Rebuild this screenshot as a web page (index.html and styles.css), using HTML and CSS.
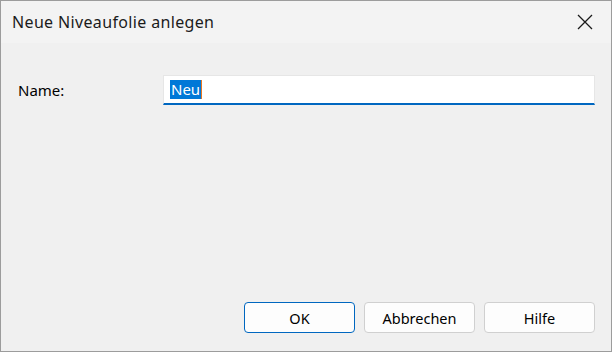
FILE: index.html
```html
<!DOCTYPE html>
<html>
  <head>
    <title>Neue Niveaufolie anlegen</title>
    <link rel="stylesheet" href="styles.css">
  </head>
  <body>
    <div class="window">
      <div class="titlebar">
        <span class="title">Neue Niveaufolie anlegen</span>
        <button class="close" aria-label="Schließen">
          <svg width="16" height="16" viewBox="0 0 16 16">
            <path d="M1 1 L15 15 M15 1 L1 15" stroke="#1a1a1a" stroke-width="1.3" fill="none" />
          </svg>
        </button>
      </div>

      <div class="content">
        <div class="row">
          <label for="name">Name:</label>
          <div class="field">
            <span class="selected">Neu</span><span class="caret"></span>
          </div>
        </div>

        <div class="buttons">
          <button class="btn default">OK</button>
          <button class="btn">Abbrechen</button>
          <button class="btn">Hilfe</button>
        </div>
      </div>
    </div>
  </body>
</html>
```

FILE: styles.css
```css
/* Dialog window */
body {
  margin: 0;
  padding: 0;
  font-family: "Noto Sans", "Open Sans", sans-serif;
  color: #000;
}

.window {
  width: 612px;
  height: 352px;
  box-sizing: border-box;
  border: 1px solid #9c9c9c;
  background-color: #f0f0f0;
  display: flex;
  flex-direction: column;
}

.titlebar {
  height: 42px;
  background-color: #f3f3f3;
  display: flex;
  align-items: center;
  justify-content: space-between;
  padding-left: 11px;
}

.title {
  font-size: 16px;
  letter-spacing: 0.35px;
  color: #1b1b1b;
  margin-top: -1px;
}

.close {
  width: 46px;
  height: 42px;
  border: none;
  background: none;
  padding: 0;
  display: flex;
  align-items: center;
  justify-content: center;
  margin-right: 3px;
}

.content {
  flex: 1;
  display: flex;
  flex-direction: column;
  justify-content: space-between;
  padding: 32px 16px 18px 17px;
}

.row {
  display: flex;
  align-items: center;
}

label {
  width: 145px;
  font-size: 15px;
}

.field {
  flex: 1;
  height: 30px;
  box-sizing: border-box;
  background-color: #fff;
  border: 1px solid #e6e6e6;
  border-bottom: 2px solid #0067c0;
  display: flex;
  align-items: center;
  padding-left: 6px;
  font-size: 15px;
}

.selected {
  background-color: #0078d7;
  color: #fff;
  line-height: 19px;
  padding: 0 1px;
}

.caret {
  width: 1px;
  height: 19px;
  background-color: #e87722;
}

.buttons {
  display: flex;
  justify-content: flex-end;
  gap: 9px;
}

.btn {
  width: 111px;
  height: 31px;
  box-sizing: border-box;
  background-color: #fdfdfd;
  border: 1px solid #d0d0d0;
  border-radius: 4px;
  font-family: "Noto Sans", "Open Sans", sans-serif;
  font-size: 14.5px;
  color: #000;
  padding: 0;
}

.btn.default {
  border-color: #0067c0;
}
```
